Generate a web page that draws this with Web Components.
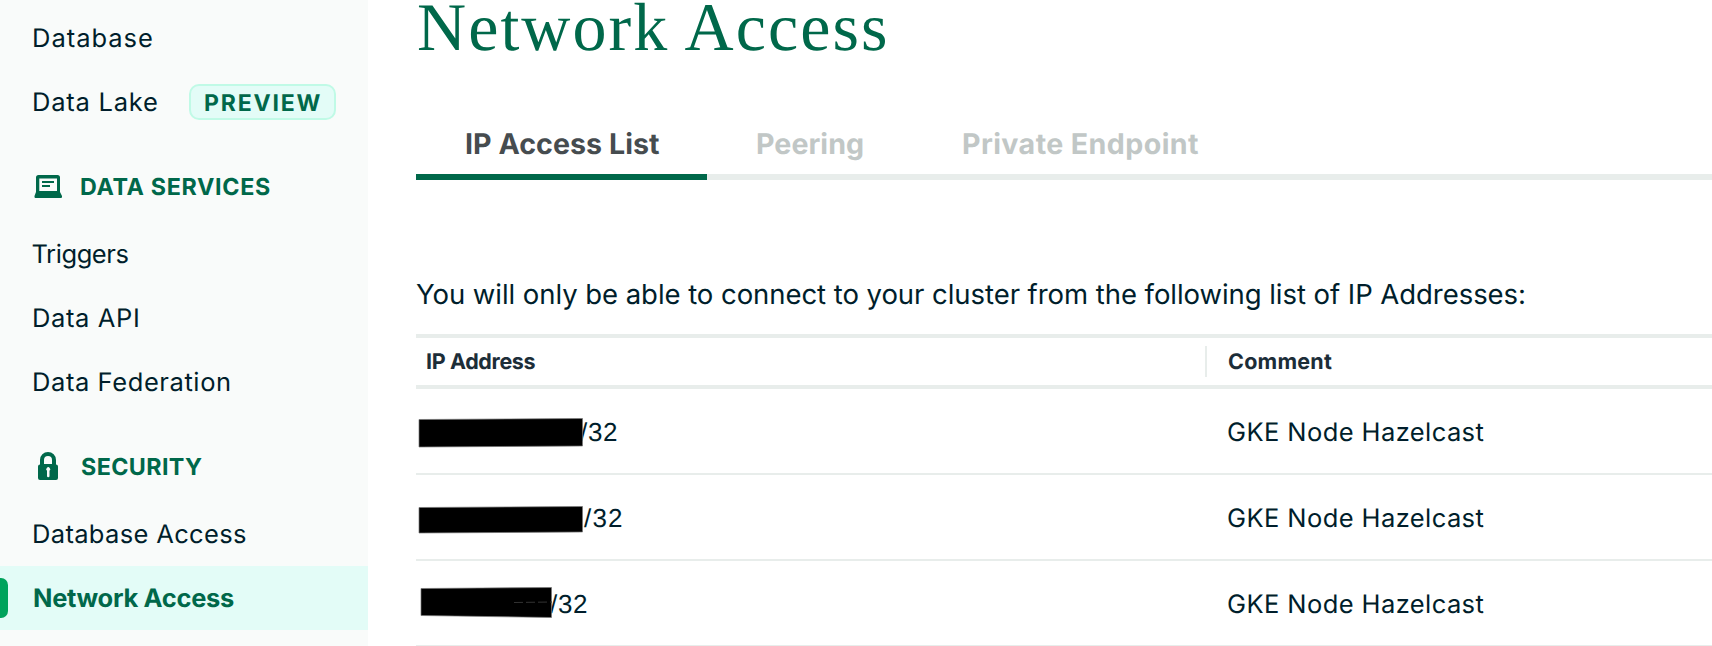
<!DOCTYPE html>
<html lang="en">
<head>
<meta charset="utf-8">
<title>Network Access</title>
<style>
html,body{margin:0;height:100%;overflow:hidden;background:#fff}
body{font-family:Inter,"Open Sans",sans-serif;color:#001e2b;text-rendering:geometricPrecision}
</style>
</head>
<body>
<network-page></network-page>
<script>
const define = (name, html, init) => customElements.define(name, class extends HTMLElement {
  constructor() {
    super();
    const t = document.createElement('template');
    t.innerHTML = html;
    this.attachShadow({mode: 'open'}).append(t.content.cloneNode(true));
  }
  connectedCallback() { if (init) init.call(this, this.shadowRoot); }
});

/* A single line of text, tracked so that its glyphs span the given width. */
define('tracked-text', `<style>:host{display:inline-block;white-space:pre;flex:none}</style><slot></slot>`, function () {
  const text = this.textContent, cs = getComputedStyle(this);
  const ctx = document.createElement('canvas').getContext('2d');
  ctx.font = `${cs.fontWeight} ${cs.fontSize} ${cs.fontFamily}`;
  ctx.textRendering = 'geometricPrecision';
  const m = ctx.measureText(text);
  const ink = m.actualBoundingBoxLeft + m.actualBoundingBoxRight;
  const gap = (Number(this.getAttribute('span')) - ink) / (text.length - 1);
  this.style.letterSpacing = gap.toFixed(3) + 'px';
  this.style.marginLeft = m.actualBoundingBoxLeft.toFixed(2) + 'px';
  this.style.marginRight = (-gap).toFixed(3) + 'px';
});

define('nav-item', `<style>
:host{display:flex;box-sizing:border-box;height:64px;padding-left:34px;position:relative;font-size:25.5px;line-height:66px}
:host([active]){background:#e3fcf7;color:#00684a;font-weight:700}
:host([active])::before{content:"";position:absolute;left:0;top:12px;width:8px;height:40px;border-radius:0 7px 7px 0;background:#00a35c}
</style><slot></slot>`);

define('preview-badge', `<style>
:host{display:block;position:absolute;left:189px;top:14px;box-sizing:border-box;width:147px;height:36px;padding-left:14px;border:2px solid #c0fae6;border-radius:10px;background:#e3fcf7;color:#00684a;font-size:23px;font-weight:700;line-height:34px}
</style><tracked-text span="115.500">PREVIEW</tracked-text>`);

define('nav-heading', `<style>
:host{display:grid;grid-template-columns:47px auto;justify-content:start;box-sizing:border-box;height:88px;padding-left:34px;color:#00684a;font-size:23.3px;font-weight:650;line-height:105px}
svg{display:block;width:28px;height:30px;margin-top:37px;fill:currentColor}
</style><svg viewBox="0 0 28 30"></svg><span><slot></slot></span>`, function (root) {
  root.querySelector('svg').innerHTML = this.getAttribute('icon') === 'lock'
    ? '<path d="M6 13.500V9a8 8 0 0 1 16 0v4.500a2 2 0 0 1 2 2V27a2 2 0 0 1-2 2H6a2 2 0 0 1-2-2V15.500a2 2 0 0 1 2-2Zm4-.5h8V9a4 4 0 0 0-8 0v4Zm3 6.800V25a1 1 0 0 0 2.500 0v-5.200a2 2 0 1 0-2.500 0Z" fill-rule="evenodd"/>'
    : '<path fill-rule="evenodd" d="M4.500 4h19A2.500 2.500 0 0 1 26 6.500V21l2 4v1a1 1 0 0 1-1 1H1.500a1 1 0 0 1-1-1v-1L2 21V6.500A2.500 2.500 0 0 1 4.500 4ZM5.300 7.500V20h17.700V7.500H5.300Z"/><path d="M8 10h12v2H8zM8 14h8v2H8z"/>';
});

define('side-nav', `<style>
:host{display:block;box-sizing:border-box;padding-top:6px;background:#f9fbfa}
</style>
<nav-item><tracked-text span="118">Database</tracked-text></nav-item>
<nav-item><tracked-text span="123">Data Lake</tracked-text><preview-badge></preview-badge></nav-item>
<nav-heading icon="laptop"><tracked-text span="189">DATA SERVICES</tracked-text></nav-heading>
<nav-item style="padding-left:32.500px"><tracked-text span="96">Triggers</tracked-text></nav-item>
<nav-item><tracked-text span="104">Data API</tracked-text></nav-item>
<nav-item><tracked-text span="196">Data Federation</tracked-text></nav-item>
<nav-heading icon="lock"><tracked-text span="121">SECURITY</tracked-text></nav-heading>
<nav-item><tracked-text span="212">Database Access</tracked-text></nav-item>
<nav-item active><tracked-text span="200">Network Access</tracked-text></nav-item>`);

define('tab-item', `<style>
:host{display:block;box-sizing:border-box;height:62px;padding-left:50px;border-bottom:6px solid #e8edeb;color:#c1c7c6;font-size:28.6px;font-weight:650;line-height:51px}
:host([active]){border-color:#00684a;color:#464c4f}
</style><slot></slot>`);

define('tab-bar', `<style>
:host{display:grid;grid-template-columns:291px 206px 1fr}
</style>
<tab-item active><tracked-text span="193">IP Access List</tracked-text></tab-item>
<tab-item><tracked-text span="106">Peering</tracked-text></tab-item>
<tab-item><tracked-text span="235">Private Endpoint</tracked-text></tab-item>`);

/* Address with its leading part struck out by a marker. */
define('ip-address', `<style>
:host{display:block;position:relative;font-family:"Liberation Sans",sans-serif;font-size:26px;line-height:86px}
svg{position:absolute;left:0;top:0;width:210px;height:84px}
polygon{fill:#000;stroke:#777;stroke-width:.7}
</style><slot></slot><svg viewBox="0 0 210 84"><polygon/><path fill="none" stroke="#333" stroke-width="1"/></svg>`, function (root) {
  root.querySelector('polygon').setAttribute('points', this.getAttribute('mask'));
  if (this.hasAttribute('scratch')) {
    const p = root.querySelector('path');
    p.setAttribute('d', this.getAttribute('scratch'));
    p.setAttribute('stroke-dasharray', '9 3');
  }
});

define('table-row', `<style>
:host{display:grid;grid-template-columns:812px 1fr;box-sizing:border-box;height:86px;border-bottom:2px solid #e8edeb;font-size:25.5px;line-height:87px}
</style><slot name="ip"></slot><div><tracked-text span="255.500">GKE Node Hazelcast</tracked-text></div>`);

define('access-table', `<style>
:host{display:block}
header{display:grid;grid-template-columns:789px 2px 1fr;height:47px;border:solid #e8edeb;border-width:4px 0;color:#1c2d38;font-size:21.5px;font-weight:650;line-height:48px}
header>:first-child{padding-left:11px}
header>:last-child{padding-left:21px}
i{height:31px;margin-top:8px;background:#e8edeb}
</style>
<header><div><tracked-text span="108.500">IP Address</tracked-text></div><i></i><div><tracked-text span="104">Comment</tracked-text></div></header>
<table-row><ip-address slot="ip" mask="3,30.500 166.500,29.500 166.500,57 3,58" style="padding-left:164px"><tracked-text span="37">/32</tracked-text></ip-address></table-row>
<table-row><ip-address slot="ip" mask="3,32.500 166.500,31.500 166.500,57 3,58" style="padding-left:168px"><tracked-text span="38">/32</tracked-text></ip-address></table-row>
<table-row><ip-address slot="ip" mask="5,27.500 135.500,26.500 135.500,56.500 5,54.500" scratch="M98 41.500L136 41" style="padding-left:134px"><tracked-text span="37">/32</tracked-text></ip-address></table-row>`);

define('network-page', `<style>
:host{display:grid;grid-template-columns:368px 1fr;height:646px;overflow:hidden}
main{padding-left:48px;min-width:0}
h1{margin:0;height:118px;padding-left:2px;color:#00684a;font:400 68px/55px "Liberation Serif",serif}
p{margin:0;height:154px;box-sizing:border-box;font-size:27.5px;line-height:228px}
</style>
<side-nav></side-nav>
<main>
<h1><tracked-text span="467">Network Access</tracked-text></h1>
<tab-bar></tab-bar>
<p><tracked-text span="1108">You will only be able to connect to your cluster from the following list of IP Addresses:</tracked-text></p>
<access-table></access-table>
</main>`);
</script>
</body>
</html>
